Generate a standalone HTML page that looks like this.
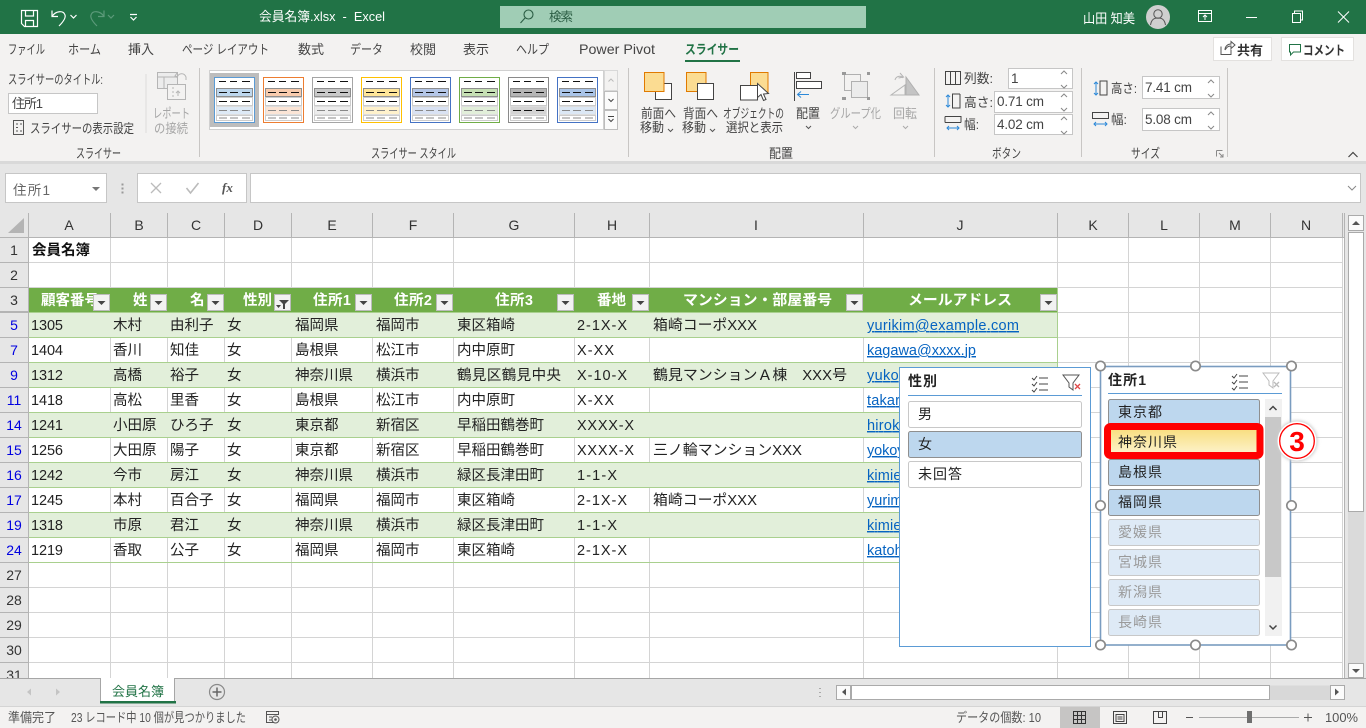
<!DOCTYPE html>
<html lang="ja"><head><meta charset="utf-8"><title>会員名簿.xlsx - Excel</title>
<style>
html,body{margin:0;padding:0;background:#fff;overflow:hidden;width:1366px;height:728px}
svg{display:block}
text{font-family:"Liberation Sans","Noto Sans CJK JP",sans-serif;white-space:pre}
.r{font-size:13px;fill:#444}
.g{font-size:13px;fill:#a6a6a6}
.w{font-size:13px;fill:#fff}
.c{font-size:14.5px;fill:#222}
.h{font-size:14.5px;fill:#fff;font-weight:700}
.ch{font-size:14px;fill:#333;text-anchor:middle}
.rh{font-size:14px;fill:#333;text-anchor:middle}
.b{fill:#0000e0}
.l{font-size:14.5px;fill:#0563c1;text-decoration:underline}
.n{font-size:13.5px;fill:#444}
.s{font-size:14px;fill:#222}
.d{font-size:14px;fill:#9a9a9a}
</style></head><body>
<svg xmlns="http://www.w3.org/2000/svg" width="1366" height="728" viewBox="0 0 1366 728">
<defs>
<g id="tile">
<rect x=".5" y=".5" width="40" height="45" fill="#fff" style="stroke:var(--a)"/>
<path d="M5 4.500h7M16 4.500h7M28 4.500h8" stroke="#111"/>
<rect x="2.500" y="11.500" width="36" height="8" style="fill:var(--b)" stroke="#8e8e8e"/>
<path d="M5 15.500h8M16 15.500h8M28 15.500h8" stroke="#111"/>
<rect x="2.500" y="20.500" width="36" height="8" fill="#fff" stroke="#ccc"/>
<path d="M5 24.500h8M16 24.500h8M28 24.500h8" stroke="#111"/>
<rect x="2.500" y="29.500" width="36" height="8" style="fill:var(--c)" stroke="#ddd"/>
<path d="M5 33.500h8M16 33.500h8M28 33.500h8" style="stroke:var(--e,#888)"/>
<rect x="2.500" y="38.500" width="36" height="5" fill="#fff" stroke="#ccc"/>
<path d="M5 41h8M16 41h8M28 41h8" stroke="#888"/>
</g>
<g id="filt"><rect x=".5" y=".5" width="16" height="16" fill="#f2f2f2" stroke="#bbb"/><path d="M4.500 7h8l-4 4z" fill="#444"/></g>
<g id="spin"><path d="M-3 3l3-3 3 3M-3 14l3 3 3-3" fill="none" stroke="#888"/></g>
</defs>

<!-- title bar -->
<rect width="1366" height="34" fill="#217346"/>
<g fill="none" stroke="#fff" stroke-width="1.200">
<path d="M21.500 10.500h16v16h-13l-3-3z"/><path d="M25.500 10.500v5.500h8v-5.500M25.500 26.500v-6h8v6"/>
<path d="M52 10.500v6h6M52.500 16c3-5 11-6 12.500-1 1 3-2 7-6 11"/>
<path d="M70.500 15l3 3 3-3"/>
<path d="M130 14.500h7M130.500 17l3 3 3-3"/>
</g>
<g fill="none" stroke="#5c9a7a" stroke-width="1.200">
<path d="M104 10.500v6h-6M103.500 16c-3-5-11-6-12.500-1-1 3 2 7 6 11"/><path d="M108 15l3 3 3-3"/>
</g>
<text class="w" x="259" y="21" textLength="126" lengthAdjust="spacingAndGlyphs">会員名簿.xlsx  -  Excel</text>
<rect x="500" y="6" width="366" height="22" fill="#a0cdb5"/>
<circle cx="528.500" cy="14.500" r="4.500" fill="none" stroke="#2c5e45" stroke-width="1.100"/><path d="M525 18l-4.500 5" stroke="#2c5e45" stroke-width="1.100"/>
<text x="549" y="21" style="font-size:12.500px;fill:#2c5e45" textLength="24">検索</text>
<text class="w" x="1083" y="23" textLength="52" lengthAdjust="spacingAndGlyphs">山田 知美</text>
<circle cx="1158" cy="17" r="12" fill="#cfcfcf"/>
<circle cx="1158" cy="14" r="4.200" fill="none" stroke="#555"/><path d="M1150.500 25c1-6 4-7 7.500-7s6.500 1 7.500 7" fill="none" stroke="#555"/>
<g fill="none" stroke="#fff">
<rect x="1198.500" y="10.500" width="13" height="11"/><path d="M1198.500 13.500h13M1205 20v-5M1203 17l2-2 2 2"/>
<path d="M1246 17.500h11"/>
<rect x="1292.500" y="13.500" width="8" height="9"/><path d="M1294.500 13.500v-2.500h8v9h-2"/>
<path d="M1338 11.500l11 11M1349 11.500l-11 11"/>
</g>

<!-- ribbon -->
<rect y="34" width="1366" height="128" fill="#f3f2f1"/>
<rect y="161" width="1366" height="52" fill="#e6e6e6"/>
<rect y="161" width="1366" height="3" fill="#d9d9d9"/>
<text class="r" x="8" y="54" textLength="37" lengthAdjust="spacingAndGlyphs">ファイル</text>
<text class="r" x="68" y="54" textLength="33" lengthAdjust="spacingAndGlyphs">ホーム</text>
<text class="r" x="128" y="54" textLength="26">挿入</text>
<text class="r" x="182" y="54" textLength="87" lengthAdjust="spacingAndGlyphs">ページ レイアウト</text>
<text class="r" x="298" y="54" textLength="26">数式</text>
<text class="r" x="350" y="54" textLength="33" lengthAdjust="spacingAndGlyphs">データ</text>
<text class="r" x="410" y="54" textLength="26">校閲</text>
<text class="r" x="463" y="54" textLength="26">表示</text>
<text class="r" x="516" y="54" textLength="33" lengthAdjust="spacingAndGlyphs">ヘルプ</text>
<text class="r" x="579" y="54" textLength="76" lengthAdjust="spacingAndGlyphs" style="font-size:14px">Power Pivot</text>
<text x="685" y="54" textLength="54" lengthAdjust="spacingAndGlyphs" style="font-size:13px;font-weight:700;fill:#217346">スライサー</text>
<rect x="685" y="60" width="55" height="2" fill="#217346"/>
<rect x="1213.500" y="37.500" width="58" height="23" fill="#fff" stroke="#e3e1df"/>
<path d="M1221 46.500v8h10v-5M1225 50c0-4 3-6 6-6v-2.500l4 3.500-4 3.500v-2.500c-3 0-4 1-6 4" fill="none" stroke="#555"/>
<text x="1237" y="55" textLength="26" style="font-size:13px;font-weight:700;fill:#333">共有</text>
<rect x="1281.500" y="37.500" width="72" height="23" fill="#fff" stroke="#e3e1df"/>
<path d="M1289.500 44.500h11v7.500h-7l-3 3v-3h-1z" fill="none" stroke="#217346"/>
<text x="1303" y="55" textLength="42" lengthAdjust="spacingAndGlyphs" style="font-size:13px;font-weight:700;fill:#333">コメント</text>

<!-- slicer group -->
<text class="r" x="8" y="84" textLength="95" lengthAdjust="spacingAndGlyphs">スライサーのタイトル:</text>
<rect x="8.500" y="93.500" width="89" height="20" fill="#fff" stroke="#c6c6c6"/>
<text class="r" x="12" y="108" textLength="31">住所1</text>
<rect x="13.500" y="120.500" width="10" height="14" fill="none" stroke="#555"/><path d="M16 124h2M16 127.500h2M16 131h2M20 124h2M20 131h2" stroke="#555"/>
<text class="r" x="30" y="133" textLength="104" lengthAdjust="spacingAndGlyphs">スライサーの表示設定</text>
<text class="r" x="76" y="158" textLength="45" lengthAdjust="spacingAndGlyphs">スライサー</text>
<path d="M146 74v59" stroke="#dcdcdc"/>
<g fill="none" stroke="#b5b5b5">
<rect x="157.500" y="72.500" width="20" height="16" fill="#ececec"/><path d="M157.500 77h20M164 77v11"/>
<rect x="167.500" y="84.500" width="18" height="15" fill="#f3f2f1"/><path d="M172 88h2M172 92h2M172 96h2M178 91v5M176 93l2-2 2 2"/>
<path d="M177 78c1-5 7-6 9-1v3M177 73l-2 3 3 1"/>
</g>
<text class="g" x="153" y="118" textLength="37" lengthAdjust="spacingAndGlyphs">レポート</text>
<text class="g" x="154" y="133" textLength="34" lengthAdjust="spacingAndGlyphs">の接続</text>
<path d="M199.500 68v89M628.500 68v89M934.500 68v89M1081.500 68v89M1227.500 68v89" stroke="#c8c6c4"/>

<!-- gallery -->
<rect x="209.500" y="70.500" width="394" height="59" fill="#fff" stroke="#d0d0d0"/>
<rect x="210" y="73" width="49" height="54" fill="#bdbdbd"/>
<use href="#tile" x="214" y="77" style="--a:#5b9bd5;--b:#bdd7ee;--c:#deeaf6"/>
<use href="#tile" x="263" y="77" style="--a:#ed7d31;--b:#f8cbad;--c:#fbe5d6"/>
<use href="#tile" x="312" y="77" style="--a:#a5a5a5;--b:#c9c9c9;--c:#ededed"/>
<use href="#tile" x="361" y="77" style="--a:#ffc000;--b:#ffe699;--c:#fff2cc"/>
<use href="#tile" x="410" y="77" style="--a:#4472c4;--b:#b4c6e7;--c:#d9e2f3"/>
<use href="#tile" x="459" y="77" style="--a:#70ad47;--b:#c6e0b4;--c:#e2efda"/>
<use href="#tile" x="508" y="77" style="--a:#8a8a8a;--b:#b5b5b5;--c:#d4d4d4;--e:#111"/>
<use href="#tile" x="557" y="77" style="--a:#4472c4;--b:#a9c4e8;--c:#dce8f5"/>
<rect x="604.500" y="70.500" width="13" height="20" fill="#f3f2f1" stroke="#d8d8d8"/>
<rect x="604.500" y="91.500" width="13" height="18" fill="#fbfbfb" stroke="#bdbdbd"/>
<rect x="604.500" y="110.500" width="13" height="19" fill="#fbfbfb" stroke="#bdbdbd"/>
<path d="M608.500 81.500l2.500-2.500 2.500 2.500" fill="none" stroke="#bbb"/>
<path d="M608.500 99l2.500 2.500 2.500-2.500" fill="none" stroke="#444"/>
<path d="M608 116.500h6M608.500 119l2.500 2.500 2.500-2.500" fill="none" stroke="#444"/>
<text class="r" x="371" y="158" textLength="85" lengthAdjust="spacingAndGlyphs">スライサー スタイル</text>

<!-- arrange -->
<rect x="655.500" y="83.500" width="16" height="16" fill="#fff" stroke="#444"/>
<rect x="644.500" y="72.500" width="19.500" height="19" fill="#fbdc92" stroke="#e07a00"/>
<rect x="686.500" y="72.500" width="19.500" height="19" fill="#fbdc92" stroke="#e07a00"/>
<rect x="697.500" y="83.500" width="16" height="16" fill="#fff" stroke="#444"/>
<rect x="750.500" y="72.500" width="17.500" height="20" fill="#fbdc92" stroke="#e07a00"/>
<rect x="740.500" y="85.500" width="17" height="14.500" fill="#fff" stroke="#444"/>
<path d="M757.500 83.500v14l3.500-3 2.500 6 2.500-1-2.500-5.500 5-.5z" fill="#fff" stroke="#444"/>
<path d="M794.500 72v29" stroke="#444"/>
<rect x="796.500" y="72.500" width="14" height="6" fill="#fff" stroke="#444"/>
<rect x="796.500" y="81.500" width="25" height="7" fill="#fff" stroke="#444"/>
<path d="M809 94.500h-11M801 91.500l-3.500 3 3.500 3" fill="none" stroke="#2b88d8"/>
<g fill="none" stroke="#b0b0b0"><rect x="844.500" y="74.500" width="16" height="16"/><rect x="851.500" y="81.500" width="16" height="16" fill="#ececec"/></g>
<path d="M842 72h4v3h-4zM867 72h3v3h-3zM842 97h4v3h-4zM867 97h3v3h-3z" fill="#999"/>
<path d="M906 77l13 18h-13z" fill="#c4c4c4" stroke="#b0b0b0"/>
<path d="M891 95l14-10v10zM895 80c1-4 6-5 8-2M900 73l3.500 4-5 1" fill="none" stroke="#b5b5b5"/>
<g>
<text class="r" x="641" y="118" textLength="35" lengthAdjust="spacingAndGlyphs">前面へ</text>
<text class="r" x="640" y="132" textLength="24" lengthAdjust="spacingAndGlyphs">移動</text>
<path d="M668 129l2.500 2.500 2.500-2.500" fill="none" stroke="#555"/>
<text class="r" x="683" y="118" textLength="35" lengthAdjust="spacingAndGlyphs">背面へ</text>
<text class="r" x="682" y="132" textLength="24" lengthAdjust="spacingAndGlyphs">移動</text>
<path d="M710 129l2.500 2.500 2.500-2.500" fill="none" stroke="#555"/>
<text class="r" x="723" y="118" textLength="61" lengthAdjust="spacingAndGlyphs">オブジェクトの</text>
<text class="r" x="726" y="132" textLength="57" lengthAdjust="spacingAndGlyphs">選択と表示</text>
<text class="r" x="796" y="118" textLength="24" lengthAdjust="spacingAndGlyphs">配置</text>
<path d="M806 126l2.500 2.500 2.500-2.500" fill="none" stroke="#555"/>
<text class="g" x="830" y="118" textLength="51" lengthAdjust="spacingAndGlyphs">グループ化</text>
<path d="M853 126l2.500 2.500 2.500-2.500" fill="none" stroke="#aaa"/>
<text class="g" x="893" y="118" textLength="24" lengthAdjust="spacingAndGlyphs">回転</text>
<path d="M903 126l2.500 2.500 2.500-2.500" fill="none" stroke="#aaa"/>
<text class="r" x="769" y="158" textLength="24" lengthAdjust="spacingAndGlyphs">配置</text>
</g>

<!-- button group -->
<g fill="none" stroke="#444">
<rect x="945.500" y="71.500" width="15" height="13"/><path d="M950.500 71.500v13M955.500 71.500v13"/>
<path d="M956 94h-3.500v14h3.500M960 94v14h-4M956 94h4"/>
<path d="M945 116.500h16v6M945 116.500v6M945 122.500h16"/>
<path d="M1103 81h-3v14h3M1103 81h4v14h-4"/>
<path d="M1092.500 112.500h16v6h-16z"/>
</g>
<path d="M948 95v12M946 97l2-2 2 2M946 105l2 2 2-2M947 128h12M949 126l-2 2 2 2M957 126l2 2-2 2M1096 82v13M1094 84l2-2 2 2M1094 93l2 2 2-2M1094 124h13M1096 122l-2 2 2 2M1105 122l2 2-2 2" fill="none" stroke="#2b88d8"/>
<text class="r" x="964" y="83" textLength="29" lengthAdjust="spacingAndGlyphs">列数:</text>
<text class="r" x="964" y="107" textLength="29" lengthAdjust="spacingAndGlyphs">高さ:</text>
<text class="r" x="964" y="129" textLength="15" lengthAdjust="spacingAndGlyphs">幅:</text>
<rect x="1008.500" y="68.500" width="64" height="20" fill="#fff" stroke="#c6c6c6"/>
<rect x="994.500" y="91.500" width="78" height="21" fill="#fff" stroke="#c6c6c6"/>
<rect x="994.500" y="114.500" width="78" height="20" fill="#fff" stroke="#c6c6c6"/>
<text class="n" x="1011" y="83">1</text>
<text class="n" x="997" y="106" textLength="47">0.71 cm</text>
<text class="n" x="997" y="129" textLength="47">4.02 cm</text>
<use href="#spin" x="1064" y="71"/><use href="#spin" x="1064" y="94"/><use href="#spin" x="1064" y="117"/>
<text class="r" x="992" y="158" textLength="29" lengthAdjust="spacingAndGlyphs">ボタン</text>
<text class="r" x="1111" y="93" textLength="26" lengthAdjust="spacingAndGlyphs">高さ:</text>
<text class="r" x="1111" y="124" textLength="16" lengthAdjust="spacingAndGlyphs">幅:</text>
<rect x="1142.500" y="76.500" width="77" height="22" fill="#fff" stroke="#c6c6c6"/>
<rect x="1142.500" y="108.500" width="77" height="22" fill="#fff" stroke="#c6c6c6"/>
<text class="n" x="1145" y="92" textLength="47">7.41 cm</text>
<text class="n" x="1145" y="124" textLength="47">5.08 cm</text>
<use href="#spin" x="1211" y="80"/><use href="#spin" x="1211" y="112"/>
<text class="r" x="1131" y="158" textLength="29" lengthAdjust="spacingAndGlyphs">サイズ</text>
<path d="M1216.500 150.500h6M1216.500 150.500v6M1223 157l-4-4M1223 154v3h-3" fill="none" stroke="#888"/>
<path d="M1348.500 157l4.500-4.500 4.500 4.500" fill="none" stroke="#444" stroke-width="1.200"/>

<!-- formula bar -->
<rect x="5.500" y="173.500" width="101" height="29" fill="#fff" stroke="#c6c6c6"/>
<text x="13" y="195" style="font-size:13.500px;fill:#666" textLength="37">住所1</text>
<path d="M92 187h8l-4 4z" fill="#777"/>
<path d="M122 184h1v1h-1zM122 188h1v1h-1zM122 192h1v1h-1z" fill="#999" stroke="#999"/>
<rect x="137.500" y="173.500" width="109" height="29" fill="#fff" stroke="#c6c6c6"/>
<path d="M151 183l10 10M161 183l-10 10" stroke="#bbb" stroke-width="1.300"/>
<path d="M186.500 188l4 5 8-10" fill="none" stroke="#bbb" stroke-width="1.600"/>
<text x="222" y="192" style="font-family:'Liberation Serif',serif;font-style:italic;font-weight:700;font-size:13px;fill:#555">fx</text>
<rect x="250.500" y="173.500" width="1110" height="29" fill="#fff" stroke="#c6c6c6"/>
<path d="M1348 186l4 4 4-4" fill="none" stroke="#888"/>

<!-- sheet -->
<rect x="0" y="213" width="1345" height="465" fill="#fff"/>
<rect x="0" y="213" width="1345" height="24" fill="#e6e6e6"/>
<rect x="0" y="213" width="28" height="465" fill="#e6e6e6"/>
<path d="M24 218v15h-16z" fill="#b4b4b4"/>
<!-- grid -->
<g stroke="#d4d4d4">
<path d="M110.500 237V678M167.500 237V678M224.500 237V678M291.500 237V678M372.500 237V678M453.500 237V678M574.500 237V678M649.500 237V678M863.500 237V678M1057.500 237V678M1128.500 237V678M1199.500 237V678M1270.500 237V678M1342.500 237V678"/>
<path d="M29 262.500H1343M29 287.500H1343M29 312.500H1343M29 337.500H1343M29 362.500H1343M29 387.500H1343M29 412.500H1343M29 437.500H1343M29 462.500H1343M29 487.500H1343M29 512.500H1343M29 537.500H1343M29 562.500H1343M29 587.500H1343M29 612.500H1343M29 637.500H1343M29 662.500H1343"/>
</g>
<g stroke="#b4b4b4">
<path d="M28.500 213V678M0 237.500H1345"/>
<path d="M110.500 213v24M167.500 213v24M224.500 213v24M291.500 213v24M372.500 213v24M453.500 213v24M574.500 213v24M649.500 213v24M863.500 213v24M1057.500 213v24M1128.500 213v24M1199.500 213v24M1270.500 213v24M1342.500 213v24"/>
<path d="M0 262.500h28M0 287.500h28M0 312.500h28M0 337.500h28M0 362.500h28M0 387.500h28M0 412.500h28M0 437.500h28M0 462.500h28M0 487.500h28M0 512.500h28M0 537.500h28M0 562.500h28M0 587.500h28M0 612.500h28M0 637.500h28M0 662.500h28"/>
</g>
<path d="M1344.500 213V678" stroke="#b4b4b4"/>
<text class="ch" x="69" y="230">A</text><text class="ch" x="139" y="230">B</text><text class="ch" x="196" y="230">C</text><text class="ch" x="258" y="230">D</text><text class="ch" x="332" y="230">E</text><text class="ch" x="413" y="230">F</text><text class="ch" x="514" y="230">G</text><text class="ch" x="612" y="230">H</text><text class="ch" x="756" y="230">I</text><text class="ch" x="960" y="230">J</text><text class="ch" x="1093" y="230">K</text><text class="ch" x="1164" y="230">L</text><text class="ch" x="1235" y="230">M</text><text class="ch" x="1306" y="230">N</text>
<text class="rh" x="14" y="255">1</text><text class="rh" x="14" y="280">2</text><text class="rh" x="14" y="305">3</text>
<text class="rh b" x="14" y="330">5</text><text class="rh b" x="14" y="355">7</text><text class="rh b" x="14" y="380">9</text><text class="rh b" x="14" y="405">11</text><text class="rh b" x="14" y="430">14</text><text class="rh b" x="14" y="455">15</text><text class="rh b" x="14" y="480">16</text><text class="rh b" x="14" y="505">17</text><text class="rh b" x="14" y="530">19</text><text class="rh b" x="14" y="555">24</text>
<text class="rh" x="14" y="580">27</text><text class="rh" x="14" y="605">28</text><text class="rh" x="14" y="630">29</text><text class="rh" x="14" y="655">30</text><text class="rh" x="14" y="680">31</text>
<path d="M0 311.500h28" stroke="#b4b4b4"/>

<text x="32" y="255" style="font-size:14.500px;font-weight:700;fill:#111">会員名簿</text>

<!-- table -->
<rect x="29" y="288" width="1028" height="25" fill="#70ad47"/>
<rect x="29" y="313" width="1028" height="25" fill="#e2efda"/>
<rect x="29" y="363" width="1028" height="25" fill="#e2efda"/>
<rect x="29" y="413" width="1028" height="25" fill="#e2efda"/>
<rect x="29" y="463" width="1028" height="25" fill="#e2efda"/>
<rect x="29" y="513" width="1028" height="25" fill="#e2efda"/>
<path d="M29 312.500H1057M29 337.500H1057M29 362.500H1057M29 387.500H1057M29 412.500H1057M29 437.500H1057M29 462.500H1057M29 487.500H1057M29 512.500H1057M29 537.500H1057M29 562.500H1057" stroke="#a9d08e"/>
<path d="M1057.500 288V562" stroke="#a9d08e"/>
<text class="h" x="41" y="305">顧客番号</text><text class="h" x="133" y="305">姓</text><text class="h" x="190" y="305">名</text><text class="h" x="243" y="305">性別</text><text class="h" x="313" y="305" textLength="38">住所1</text><text class="h" x="394" y="305" textLength="38">住所2</text><text class="h" x="495" y="305" textLength="38">住所3</text><text class="h" x="597" y="305">番地</text><text class="h" x="683" y="305" textLength="149" lengthAdjust="spacingAndGlyphs">マンション・部屋番号</text><text class="h" x="908" y="305" textLength="104" lengthAdjust="spacingAndGlyphs">メールアドレス</text>
<use href="#filt" x="93" y="294"/><use href="#filt" x="150" y="294"/><use href="#filt" x="207" y="294"/><use href="#filt" x="355" y="294"/><use href="#filt" x="436" y="294"/><use href="#filt" x="557" y="294"/><use href="#filt" x="632" y="294"/><use href="#filt" x="846" y="294"/><use href="#filt" x="1040" y="294"/>
<rect x="274.500" y="294.500" width="16" height="16" fill="#f2f2f2" stroke="#bbb"/><path d="M279 300h10l-4 4v5h-2v-5zM276 305h5l-2.500 3z" fill="#444"/>

<g transform="translate(0,330)"><text class="c" x="31" textLength="32">1305</text><text class="c" x="113">木村</text><text class="c" x="170">由利子</text><text class="c" x="227">女</text><text class="c" x="295">福岡県</text><text class="c" x="376">福岡市</text><text class="c" x="457">東区箱崎</text><text class="c" x="577" textLength="50">2-1X-X</text><text class="c" x="653" textLength="104" lengthAdjust="spacingAndGlyphs">箱崎コーポXXX</text><text class="l" x="867" textLength="152">yurikim@example.com</text></g>
<g transform="translate(0,355)"><text class="c" x="31" textLength="32">1404</text><text class="c" x="113">香川</text><text class="c" x="170">知佳</text><text class="c" x="227">女</text><text class="c" x="295">島根県</text><text class="c" x="376">松江市</text><text class="c" x="457">内中原町</text><text class="c" x="577" textLength="37">X-XX</text><text class="l" x="867" textLength="109">kagawa@xxxx.jp</text></g>
<g transform="translate(0,380)"><text class="c" x="31" textLength="32">1312</text><text class="c" x="113">高橋</text><text class="c" x="170">裕子</text><text class="c" x="227">女</text><text class="c" x="295">神奈川県</text><text class="c" x="376">横浜市</text><text class="c" x="457" textLength="104">鶴見区鶴見中央</text><text class="c" x="577" textLength="50">X-10-X</text><text class="c" x="653" textLength="194" lengthAdjust="spacingAndGlyphs">鶴見マンションＡ棟　XXX号</text><text class="l" x="867" textLength="152">yukoxx@example.com</text></g>
<g transform="translate(0,405)"><text class="c" x="31" textLength="32">1418</text><text class="c" x="113">高松</text><text class="c" x="170">里香</text><text class="c" x="227">女</text><text class="c" x="295">島根県</text><text class="c" x="376">松江市</text><text class="c" x="457">内中原町</text><text class="c" x="577" textLength="37">X-XX</text><text class="l" x="867" textLength="152">takarax@example.com</text></g>
<g transform="translate(0,430)"><text class="c" x="31" textLength="32">1241</text><text class="c" x="113">小田原</text><text class="c" x="170">ひろ子</text><text class="c" x="227">女</text><text class="c" x="295">東京都</text><text class="c" x="376">新宿区</text><text class="c" x="457">早稲田鶴巻町</text><text class="c" x="577" textLength="57">XXXX-X</text><text class="l" x="867" textLength="152">hirokox@example.com</text></g>
<g transform="translate(0,455)"><text class="c" x="31" textLength="32">1256</text><text class="c" x="113">大田原</text><text class="c" x="170">陽子</text><text class="c" x="227">女</text><text class="c" x="295">東京都</text><text class="c" x="376">新宿区</text><text class="c" x="457">早稲田鶴巻町</text><text class="c" x="577" textLength="57">XXXX-X</text><text class="c" x="653" textLength="149" lengthAdjust="spacingAndGlyphs">三ノ輪マンションXXX</text><text class="l" x="867" textLength="152">yokoyax@example.com</text></g>
<g transform="translate(0,480)"><text class="c" x="31" textLength="32">1242</text><text class="c" x="113">今市</text><text class="c" x="170">房江</text><text class="c" x="227">女</text><text class="c" x="295">神奈川県</text><text class="c" x="376">横浜市</text><text class="c" x="457">緑区長津田町</text><text class="c" x="577" textLength="40">1-1-X</text><text class="l" x="867" textLength="152">kimiexx@example.com</text></g>
<g transform="translate(0,505)"><text class="c" x="31" textLength="32">1245</text><text class="c" x="113">本村</text><text class="c" x="170">百合子</text><text class="c" x="227">女</text><text class="c" x="295">福岡県</text><text class="c" x="376">福岡市</text><text class="c" x="457">東区箱崎</text><text class="c" x="577" textLength="50">2-1X-X</text><text class="c" x="653" textLength="104" lengthAdjust="spacingAndGlyphs">箱崎コーポXXX</text><text class="l" x="867" textLength="152">yurimox@example.com</text></g>
<g transform="translate(0,530)"><text class="c" x="31" textLength="32">1318</text><text class="c" x="113">市原</text><text class="c" x="170">君江</text><text class="c" x="227">女</text><text class="c" x="295">神奈川県</text><text class="c" x="376">横浜市</text><text class="c" x="457">緑区長津田町</text><text class="c" x="577" textLength="40">1-1-X</text><text class="l" x="867" textLength="152">kimiexx@example.com</text></g>
<g transform="translate(0,555)"><text class="c" x="31" textLength="32">1219</text><text class="c" x="113">香取</text><text class="c" x="170">公子</text><text class="c" x="227">女</text><text class="c" x="295">福岡県</text><text class="c" x="376">福岡市</text><text class="c" x="457">東区箱崎</text><text class="c" x="577" textLength="50">2-1X-X</text><text class="l" x="867" textLength="152">katohxx@example.com</text></g>

<!-- slicer 性別 -->
<rect x="899.500" y="367.500" width="191" height="279" fill="#fff" stroke="#5b9bd5"/>
<text x="908" y="386" style="font-size:14px;font-weight:700;fill:#222" textLength="29">性別</text>
<path d="M1032 378l2 2 3-4M1032 384l2 2 3-4M1032 390l2 2 3-4M1039 378h9M1039 384h9M1039 390h9" fill="none" stroke="#444"/>
<path d="M1063 375h16l-6 8v7l-4-3v-4z" fill="none" stroke="#555"/>
<path d="M1075 384l5 5M1080 384l-5 5" stroke="#e04848" stroke-width="1.300"/>
<path d="M908 395.500h174" stroke="#5b9bd5"/>
<rect x="908.500" y="401.500" width="173" height="26" rx="2" fill="#fff" stroke="#c8c8c8"/>
<rect x="908.500" y="431.500" width="173" height="26" rx="2" fill="#bdd7ee" stroke="#8f8f8f"/>
<rect x="908.500" y="461.500" width="173" height="26" rx="2" fill="#fff" stroke="#c8c8c8"/>
<text class="s" x="918" y="419">男</text><text class="s" x="918" y="449">女</text><text class="s" x="918" y="479" textLength="44">未回答</text>

<!-- slicer 住所1 -->
<rect x="1100.500" y="366.500" width="190" height="278.500" fill="#fff" stroke="#7a9cc0" stroke-width="1.600"/>
<text x="1108" y="385" style="font-size:14px;font-weight:700;fill:#222" textLength="38">住所1</text>
<path d="M1232 376l2 2 3-4M1232 382l2 2 3-4M1232 388l2 2 3-4M1239 376h9M1239 382h9M1239 388h9" fill="none" stroke="#444"/>
<path d="M1263 373h16l-6 8v7l-4-3v-4z" fill="none" stroke="#bbb"/>
<path d="M1274 382l5 5M1279 382l-5 5" stroke="#bbb" stroke-width="1.300"/>
<path d="M1108 393.500h174" stroke="#5b9bd5"/>
<rect x="1108.500" y="399.500" width="151" height="26" rx="2" fill="#bdd7ee" stroke="#8f8f8f"/>
<rect x="1108.500" y="459.500" width="151" height="26" rx="2" fill="#bdd7ee" stroke="#8f8f8f"/>
<rect x="1108.500" y="489.500" width="151" height="26" rx="2" fill="#bdd7ee" stroke="#8f8f8f"/>
<rect x="1108.500" y="519.500" width="151" height="26" rx="2" fill="#deeaf6" stroke="#c8c8c8"/>
<rect x="1108.500" y="549.500" width="151" height="26" rx="2" fill="#deeaf6" stroke="#c8c8c8"/>
<rect x="1108.500" y="579.500" width="151" height="26" rx="2" fill="#deeaf6" stroke="#c8c8c8"/>
<rect x="1108.500" y="609.500" width="151" height="26" rx="2" fill="#deeaf6" stroke="#c8c8c8"/>
<defs><linearGradient id="yg" x1="0" y1="0" x2="0" y2="1"><stop offset="0" stop-color="#f8dc78"/><stop offset="1" stop-color="#fdf4d0"/></linearGradient></defs>
<rect x="1107.500" y="426.500" width="152.500" height="29" rx="3" fill="url(#yg)" stroke="#f00" stroke-width="7"/>
<text class="s" x="1118" y="417" textLength="44">東京都</text>
<text class="s" x="1118" y="447" textLength="59">神奈川県</text>
<text class="s" x="1118" y="477" textLength="44">島根県</text>
<text class="s" x="1118" y="507" textLength="44">福岡県</text>
<text class="d" x="1118" y="537" textLength="44">愛媛県</text>
<text class="d" x="1118" y="567" textLength="44">宮城県</text>
<text class="d" x="1118" y="597" textLength="44">新潟県</text>
<text class="d" x="1118" y="627" textLength="44">長崎県</text>
<rect x="1265" y="399" width="17" height="237" fill="#f1f1f1"/>
<rect x="1265" y="417" width="16" height="160" fill="#c8c8c8"/>
<path d="M1269.500 410l3.500-3.500 3.500 3.500M1269.500 625.500l3.500 3.500 3.500-3.500" fill="none" stroke="#444" stroke-width="1.500"/>
<g fill="#fff" stroke="#8a8a8a" stroke-width="1.700"><circle cx="1100.500" cy="366" r="4.700"/><circle cx="1195.500" cy="366" r="4.700"/><circle cx="1291.500" cy="366" r="4.700"/><circle cx="1100.500" cy="505.500" r="4.700"/><circle cx="1291.500" cy="505.500" r="4.700"/><circle cx="1100.500" cy="645" r="4.700"/><circle cx="1195.500" cy="645" r="4.700"/><circle cx="1291.500" cy="645" r="4.700"/></g>
<!-- callout 3 -->
<defs><filter id="gl" x="-30%" y="-30%" width="160%" height="160%"><feGaussianBlur stdDeviation="1.500"/></filter></defs>
<circle cx="1297" cy="441" r="20.500" fill="#ccc" filter="url(#gl)"/>
<circle cx="1297" cy="441" r="19.500" fill="#fff"/>
<circle cx="1297" cy="441" r="17.300" fill="#fff" stroke="#f00" stroke-width="1.300"/>
<text x="1297" y="451" text-anchor="middle" style="font-size:28px;font-weight:700;fill:#f00">3</text>

<!-- v scrollbar -->
<rect x="1345" y="213" width="21" height="465" fill="#e6e6e6"/>
<rect x="1348.500" y="215.500" width="15" height="15" fill="#fbfbfb" stroke="#aaa"/>
<path d="M1352 225l4-4 4 4z" fill="#555"/>
<rect x="1348.500" y="232.500" width="15" height="279" fill="#fff" stroke="#aaa"/>
<rect x="1348" y="512" width="16" height="151" fill="#dadada"/>
<rect x="1348.500" y="663.500" width="15" height="14" fill="#fbfbfb" stroke="#aaa"/>
<path d="M1352 669l4 4 4-4z" fill="#555"/>

<!-- sheet tabs -->
<rect y="678" width="1366" height="29" fill="#e6e6e6"/>
<path d="M0 678.500H100M175 678.500H1366" stroke="#a6a6a6"/>
<rect x="100" y="678" width="75" height="25" fill="#fff"/>
<path d="M100.500 678v25M174.500 678v25" stroke="#a6a6a6"/>
<rect x="100" y="701" width="76" height="2.500" fill="#217346"/>
<text x="112" y="696" textLength="52" style="font-size:13px;fill:#217346">会員名簿</text>
<path d="M31 688.500v7l-4-3.500zM56 688.500v7l4-3.500z" fill="#c4c4c4"/>
<circle cx="217" cy="692" r="7.500" fill="none" stroke="#8a8a8a" stroke-width="1.200"/><path d="M212.500 692h9M217 687.500v9" stroke="#666" stroke-width="1.500"/>
<path d="M820 688v1M820 692v1M820 696v1" stroke="#aaa" stroke-width="2"/>
<rect x="836.500" y="685.500" width="507" height="14.500" fill="#d8d8d8"/>
<rect x="836.500" y="685.500" width="14" height="14" fill="#fbfbfb" stroke="#aaa"/>
<path d="M846 688.500v7l-4-3.500z" fill="#555"/>
<rect x="851.500" y="685.500" width="418" height="14" fill="#fff" stroke="#aaa"/>
<rect x="1330.500" y="685.500" width="14" height="14" fill="#fbfbfb" stroke="#aaa"/>
<path d="M1335 688.500v7l4-3.500z" fill="#555"/>

<!-- status bar -->
<rect y="706" width="1366" height="22" fill="#f3f2f1"/>
<path d="M0 706.500H1366" stroke="#d4d4d4"/>
<text class="r" x="8" y="722" textLength="48" lengthAdjust="spacingAndGlyphs" style="fill:#555">準備完了</text>
<text class="r" x="71" y="722" textLength="175" style="fill:#555" lengthAdjust="spacingAndGlyphs">23 レコード中 10 個が見つかりました</text>
<path d="M266.500 711.500h12v3h-12zM266.500 714.500v8h7M269 717h3M269 720h3" fill="none" stroke="#555"/><circle cx="275.500" cy="719.500" r="3.500" fill="none" stroke="#555"/><circle cx="275.500" cy="719.500" r="1.300" fill="#555"/>
<text class="r" x="956" y="722" textLength="85" style="fill:#555" lengthAdjust="spacingAndGlyphs">データの個数: 10</text>
<rect x="1060" y="707" width="40" height="21" fill="#c6c5c4"/>
<path d="M1073.500 711.500h12v12h-12zM1077.500 711.500v12M1081.500 711.500v12M1073.500 715.500h12M1073.500 719.500h12" fill="none" stroke="#333"/>
<rect x="1113.500" y="711.500" width="13" height="12" fill="none" stroke="#444"/><path d="M1116 714.500h8v7h-8zM1117.500 717h5M1117.500 719h5" fill="none" stroke="#444"/>
<path d="M1153.500 711.500h13v12h-13zM1158.500 711.500v6h4v-6" fill="none" stroke="#444"/>
<path d="M1186 717.500h7M1304 717.500h8M1308 713.500v8" stroke="#555"/>
<path d="M1199 717.500h100" stroke="#aaa"/>
<rect x="1247" y="711" width="5" height="12" fill="#6f6f6f"/>
<text class="r" x="1325" y="722" textLength="33" lengthAdjust="spacingAndGlyphs" style="fill:#555">100%</text>
</svg>
</body></html>
